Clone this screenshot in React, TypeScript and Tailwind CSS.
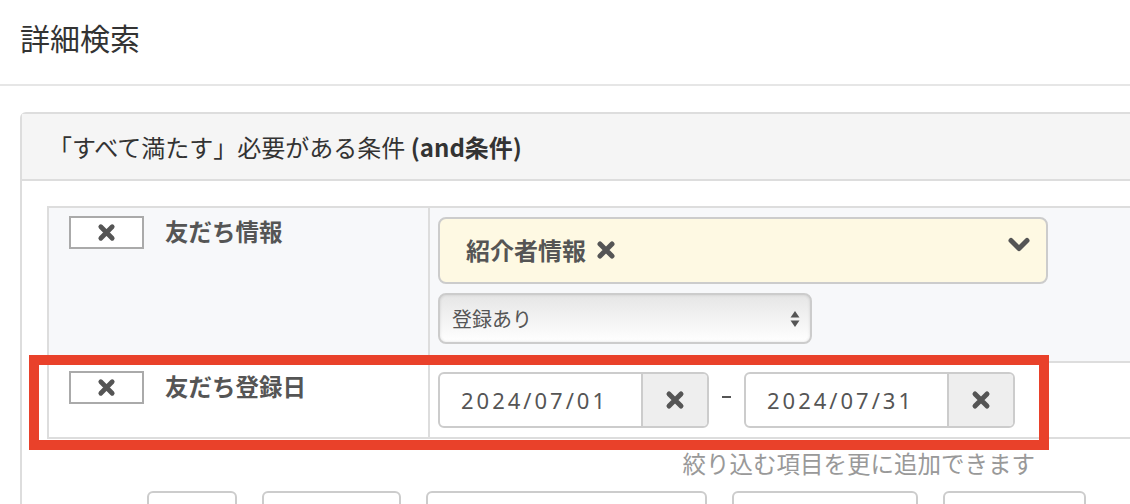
const JP = "font-['Noto_Sans_CJK_JP','Noto_Sans',sans-serif]";

function XIcon({ size = 18 }: { size?: number }) {
  return (
    <svg width={size} height={size} viewBox="0 0 20 20" className="shrink-0">
      <path
        d="M4 4 L16 16 M16 4 L4 16"
        stroke="currentColor"
        strokeWidth="5"
        strokeLinecap="round"
        fill="none"
      />
    </svg>
  );
}

function RemoveBox() {
  return (
    <button className="w-[75px] h-[33px] border-2 border-[#aaa] bg-white flex items-center justify-center text-[#555] shrink-0">
      <XIcon size={19} />
    </button>
  );
}

function DateInput({ value }: { value: string }) {
  return (
    <div className="flex h-[56px] w-[271px] border-2 border-[#ccc] rounded-md overflow-hidden bg-white">
      <div className="flex-1 flex items-center pl-[21px] text-[22px] tracking-[3px] text-[#555] font-['Noto_Sans',sans-serif]">
        {value}
      </div>
      <div className="w-[66px] bg-[#eee] border-l-2 border-[#ccc] flex items-center justify-center text-[#555]">
        <XIcon size={20} />
      </div>
    </div>
  );
}

export default function App() {
  return (
    <div className={`w-[1130px] h-[504px] overflow-hidden bg-white relative ${JP}`}>
      {/* page title */}
      <div className="h-[86px] border-b-2 border-[#e6e6e6] pl-[20px] pt-[16px]">
        <h1 className="text-[30px] text-[#333] leading-[42px]">詳細検索</h1>
      </div>

      <div className="pl-[20px] pt-[26px]">
        <div className="w-[1200px] border-2 border-[#ddd] rounded-tl-md">
          <div className="h-[67px] bg-[#f5f5f5] border-b-2 border-[#ddd] flex items-center pl-[26px] text-[24px] text-[#333]">
            「すべて満たす」必要がある条件&nbsp;<span className="font-bold">(and条件)</span>
          </div>

          <div className="pl-[25px] pt-[25px]">
            <div className="border-t-2 border-l-2 border-[#ddd]">
              {/* row 1 */}
              <div className="flex bg-[#f7f8fa] border-b-2 border-[#ddd] h-[155px]">
                <div className="w-[381px] border-r-2 border-[#ddd] flex items-start gap-[21px] pl-[20px] pt-[8px]">
                  <RemoveBox />
                  <span className="text-[23.5px] font-bold text-[#555] leading-[30px]">友だち情報</span>
                </div>
                <div className="flex flex-col items-start pl-[8px] pt-[9px] gap-[9px]">
                  <div className="w-[610px] h-[67px] bg-[#fef9e3] border-2 border-[#ccc] rounded-lg flex items-start justify-between pl-[26px] pr-[16px]">
                    <div className="flex items-center gap-[10px] h-[62px] text-[24px] font-bold text-[#555]">
                      紹介者情報
                      <XIcon size={20} />
                    </div>
                    <svg width="22" height="16" viewBox="0 0 22 16" className="text-[#555] mt-[18px]">
                      <path
                        d="M3 3.5 L11 11.5 L19 3.5"
                        stroke="currentColor"
                        strokeWidth="5"
                        strokeLinecap="round"
                        strokeLinejoin="round"
                        fill="none"
                      />
                    </svg>
                  </div>
                  <div className="w-[374px] h-[51px] border-2 border-[#ccc] rounded-lg bg-gradient-to-b from-[#e6e6e6] to-white shadow-[inset_0_0_3px_rgba(0,0,0,0.12)] flex items-center justify-between pl-[12px] pr-[10px]">
                    <span className="text-[20px] text-[#555]">登録あり</span>
                    <svg width="10" height="18" viewBox="0 0 10 18" className="text-[#555]">
                      <path d="M5 1 L9.5 7.5 H0.5 Z" fill="currentColor" />
                      <path d="M5 17 L9.5 10.5 H0.5 Z" fill="currentColor" />
                    </svg>
                  </div>
                </div>
              </div>

              {/* row 2 */}
              <div className="flex bg-white border-b-2 border-[#ddd] h-[76px]">
                <div className="w-[381px] border-r-2 border-[#ddd] flex items-start gap-[21px] pl-[20px] pt-[8px]">
                  <RemoveBox />
                  <span className="text-[23.5px] font-bold text-[#555] leading-[30px]">友だち登録日</span>
                </div>
                <div className="flex items-start pl-[8px] pt-[9px]">
                  <DateInput value="2024/07/01" />
                  <div className="w-[35px] flex justify-center pt-[24px]">
                    <span className="block w-[9px] h-[2px] bg-[#555]" />
                  </div>
                  <DateInput value="2024/07/31" />
                </div>
              </div>
            </div>

            <div className="w-[988px] text-right text-[23.5px] text-[#999] pt-[8px] leading-[32px]">
              絞り込む項目を更に追加できます
            </div>

            <div className="flex gap-[25px] pl-[100px] pt-[12px]">
              <div className="w-[90px] h-[40px] border-2 border-[#ccc] rounded-md" />
              <div className="w-[139px] h-[40px] border-2 border-[#ccc] rounded-md" />
              <div className="w-[281px] h-[40px] border-2 border-[#ccc] rounded-md" />
              <div className="w-[186px] h-[40px] border-2 border-[#ccc] rounded-md" />
              <div className="w-[143px] h-[40px] border-2 border-[#ccc] rounded-md" />
            </div>
          </div>
        </div>
      </div>

      {/* highlight annotation */}
      <div className="absolute left-[29px] top-[355px] w-[1020px] h-[95px] border-[10px] border-[#e9412a] pointer-events-none" />
    </div>
  );
}
